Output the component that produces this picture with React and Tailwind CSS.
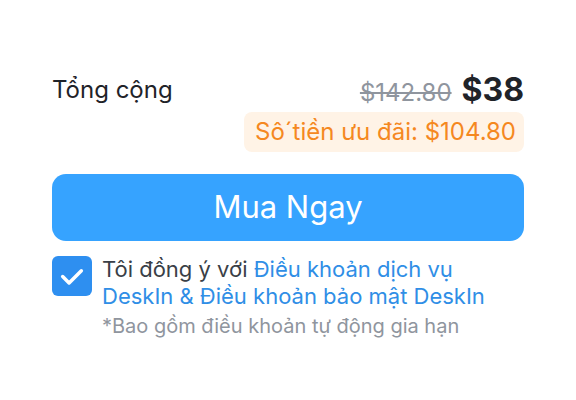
export default function App() {
  return (
    <div className="w-[576px] h-[400px] bg-white px-[52px] pt-[72px] font-['Inter',sans-serif]">
      <div className="flex items-center justify-between h-[36px]">
        <span className="text-[24px] text-[#1f2329]">Tổng cộng</span>
        <div className="flex items-baseline gap-[10px]">
          <span className="text-[24px] text-[#8f959e] line-through">$142.80</span>
          <span className="text-[32px] font-bold text-[#1f2329]">$38</span>
        </div>
      </div>
      <div className="flex justify-end mt-[4px]">
        <div className="h-[40px] pl-[11px] pr-[8px] rounded-[8px] bg-[#fff3e6] flex items-center text-[24px] text-[#f5881f]">
          Sô´tiền ưu đãi: $104.80
        </div>
      </div>
      <button className="mt-[22px] w-full h-[67px] rounded-[14px] bg-[#36a3ff] text-white text-[31px]">
        Mua Ngay
      </button>
      <div className="flex gap-[10px] mt-[15px]">
        <div className="w-[40px] h-[40px] shrink-0 rounded-[6px] bg-[#2e8ff0] flex items-center justify-center">
          <svg width="28" height="28" viewBox="0 0 24 24" fill="none" stroke="white" strokeWidth="3" strokeLinecap="round" strokeLinejoin="round">
            <path d="M4 12.5l5.5 5.5L20 7.5" />
          </svg>
        </div>
        <div className="text-[22px] leading-[27px]">
          <span className="text-[#3a3f47]">Tôi đồng ý với </span>
          <span className="text-[#2f8ee6]">
            Điều khoản dịch vụ
            <br />
            DeskIn &amp; Điều khoản bảo mật DeskIn
          </span>
          <div className="text-[20px] text-[#8f959e] mt-[3px]">*Bao gồm điều khoản tự động gia hạn</div>
        </div>
      </div>
    </div>
  );
}
